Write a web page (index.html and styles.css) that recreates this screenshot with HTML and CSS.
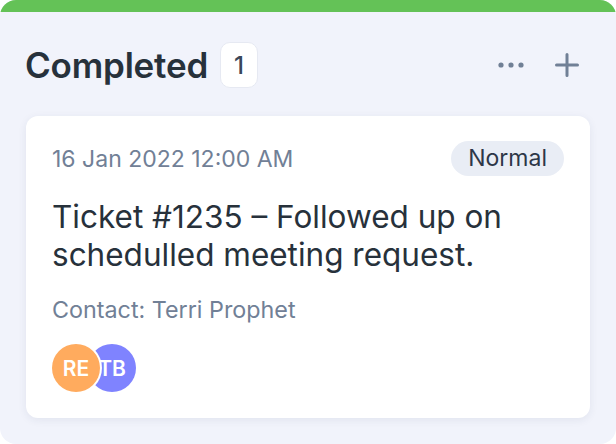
FILE: index.html
```html
<!DOCTYPE html>
<html lang="en">
<head>
  <meta charset="UTF-8">
  <meta name="viewport" content="width=device-width, initial-scale=1.0">
  <title>Board - Completed</title>
  <link rel="stylesheet" href="styles.css">
</head>
<body>
  <div class="column">
    <div class="column-bar"></div>

    <div class="column-header">
      <h2 class="column-title">Completed</h2>
      <span class="count">1</span>
      <div class="column-actions">
        <button class="icon-btn" title="More">
          <svg width="26" height="6" viewBox="0 0 26 6">
            <circle cx="3" cy="3" r="2.6" fill="#718096"/>
            <circle cx="13" cy="3" r="2.6" fill="#718096"/>
            <circle cx="23" cy="3" r="2.6" fill="#718096"/>
          </svg>
        </button>
        <button class="icon-btn" title="Add">
          <svg width="24" height="24" viewBox="0 0 24 24">
            <path d="M12 1.5v21M1.5 12h21" stroke="#718096" stroke-width="3" stroke-linecap="round"/>
          </svg>
        </button>
      </div>
    </div>

    <div class="card">
      <div class="card-top">
        <span class="card-date">16 Jan 2022 12:00 AM</span>
        <span class="priority">Normal</span>
      </div>
      <p class="card-title">Ticket #1235 – Followed up on schedulled meeting request.</p>
      <p class="card-contact">Contact: Terri Prophet</p>
      <div class="avatars">
        <span class="avatar avatar-orange">RE</span>
        <span class="avatar avatar-purple">TB</span>
      </div>
    </div>
  </div>
</body>
</html>
```

FILE: styles.css
```css
body {
  margin: 0;
  background: #ffffff;
  font-family: Inter, "Noto Sans", sans-serif;
}

.column {
  height: 444px;
  background: #f1f3fb;
  border-radius: 16px;
  overflow: hidden;
}

.column-bar {
  height: 12px;
  background: #64c257;
}

.column-header {
  display: flex;
  align-items: center;
  padding: 30px 37px 0 25px;
  height: 46px;
}

.column-title {
  margin: 0;
  font-size: 35px;
  font-weight: 600;
  color: #27313b;
  letter-spacing: -0.2px;
}

.count {
  margin-left: 12px;
  width: 38px;
  height: 46px;
  box-sizing: border-box;
  display: flex;
  align-items: center;
  justify-content: center;
  background: #ffffff;
  border: 1px solid #e6e9f2;
  border-radius: 10px;
  font-size: 24px;
  font-weight: 500;
  color: #3a4759;
}

.column-actions {
  margin-left: auto;
  display: flex;
  align-items: center;
  gap: 31px;
}

.icon-btn {
  border: none;
  background: none;
  padding: 0;
  display: flex;
  cursor: pointer;
}

.card {
  margin: 28px 26px 0 26px;
  padding: 25px 26px 26px;
  background: #ffffff;
  border-radius: 12px;
  box-shadow: 0 2px 8px rgba(40, 50, 90, 0.08);
}

.card-top {
  display: flex;
  align-items: center;
  justify-content: space-between;
}

.card-date {
  font-size: 23px;
  color: #718096;
}

.priority {
  padding: 4px 17px;
  line-height: 27px;
  background: #e9edf5;
  border-radius: 18px;
  font-size: 23px;
  color: #2d3748;
}

.card-title {
  margin: 22px 0 0;
  font-size: 31.5px;
  line-height: 38px;
  color: #27313b;
}

.card-contact {
  margin: 22px 0 0;
  font-size: 23.3px;
  line-height: 28px;
  color: #718096;
}

.avatars {
  display: flex;
  margin-top: 20px;
}

.avatar {
  width: 48px;
  height: 48px;
  border-radius: 50%;
  display: flex;
  align-items: center;
  justify-content: center;
  color: #ffffff;
  font-size: 21px;
  font-weight: 600;
}

/* white ring keeps the first avatar visible over the next one */
.avatar-orange {
  background: #ffab5e;
  box-shadow: 0 0 0 2px #ffffff;
  position: relative;
  z-index: 1;
}

.avatar-purple {
  background: #7f83ff;
  margin-left: -12px;
}
```
